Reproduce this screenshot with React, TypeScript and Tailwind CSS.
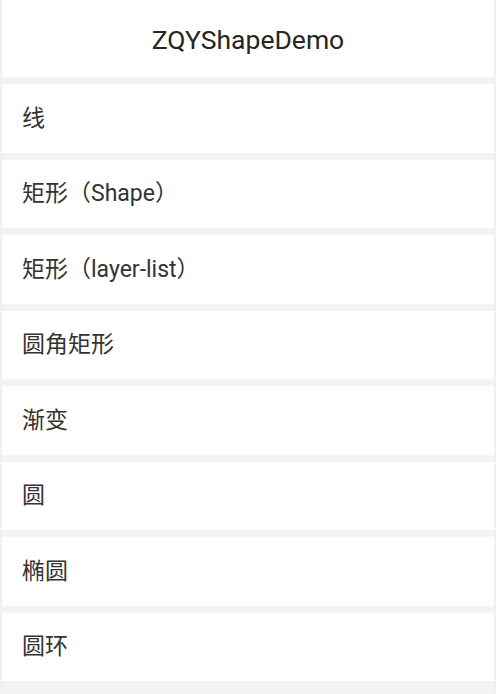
const items = ["线", "矩形（Shape）", "矩形（layer-list）", "圆角矩形", "渐变", "圆", "椭圆", "圆环"];

const App = () => {
    return (
        <div
            className="w-[496px] h-[694px] overflow-hidden bg-[#f3f3f3] border-l-2 border-l-[#edf2fa] border-r-2 border-r-[#f0f0f0] flex flex-col gap-[7px]"
            style={{ fontFamily: "Roboto, 'Noto Sans CJK SC', sans-serif" }}
        >
            <div className="h-[77px] shrink-0 bg-white flex items-center justify-center">
                <p className="text-[#262626] text-[26.5px] pt-[2px]">ZQYShapeDemo</p>
            </div>
            {items.map((item) => (
                <div key={item} className="h-[68.5px] shrink-0 bg-white flex items-center pl-[20px]">
                    <p className="text-[#333333] text-[23px] pt-[1px]">{item}</p>
                </div>
            ))}
        </div>
    )
}

export default App
